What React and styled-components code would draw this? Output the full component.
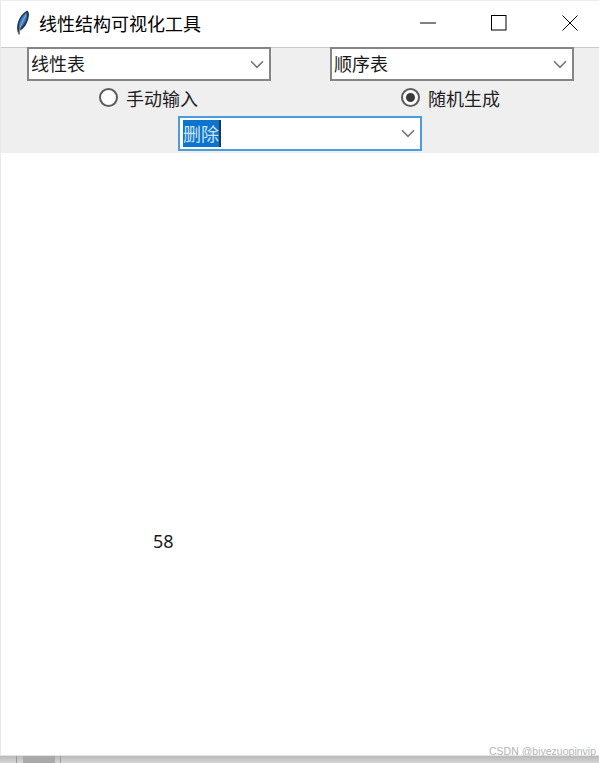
import React from 'react';
import styled, { createGlobalStyle } from 'styled-components';

const GlobalStyle = createGlobalStyle`
  html, body {
    margin: 0;
    padding: 0;
    background: #c9c9c9;
  }
  * {
    box-sizing: border-box;
  }
`;

const Page = styled.div`
  width: 599px;
  height: 763px;
  display: flex;
  flex-direction: column;
  overflow: hidden;
  font-family: 'Noto Sans CJK SC', 'Noto Sans', sans-serif;
  color: #1a1a1a;
`;

const Window = styled.div`
  height: 756px;
  display: flex;
  flex-direction: column;
  background: #fff;
  border-top: 1px solid #ececec;
  border-left: 1px solid #e8e8e8;
  border-bottom: 1px solid #e4e4e4;
`;

const TitleBar = styled.div`
  height: 46px;
  flex: none;
  display: flex;
  align-items: center;
  padding: 0 21px 2px 12px;
  background: #fff;
`;

const Title = styled.div`
  margin-left: 6px;
  font-size: 18px;
  line-height: 44px;
  color: #000;
  flex: 1;
`;

const WinButtons = styled.div`
  display: flex;
  align-items: center;
  gap: 55px;
`;

const WinButton = styled.div`
  width: 16px;
  height: 16px;
  display: flex;
  align-items: center;
  justify-content: center;
`;

const Controls = styled.div`
  height: 106px;
  flex: none;
  display: flex;
  flex-direction: column;
  background: #efefef;
  border-top: 1px solid #c8c8c8;
`;

const ComboRow = styled.div`
  display: flex;
  gap: 59px;
  margin-top: -1px;
  padding-left: 26px;
`;

const RadioRow = styled.div`
  display: flex;
  height: 35px;
  align-items: center;
  gap: 203px;
  padding: 0 0 2px 98px;
`;

const ThirdRow = styled.div`
  display: flex;
  padding-left: 177px;
`;

const Combo = styled.div`
  width: 244px;
  height: ${props => (props.$focused ? '35px' : '34px')};
  display: flex;
  align-items: center;
  justify-content: space-between;
  padding: 0 5px 0 ${props => (props.$focused ? '3px' : '2px')};
  background: #fff;
  border: ${props => (props.$focused ? '2px solid #4a9be0' : '2px solid #858585')};
  font-size: 18px;
  color: #1a1a1a;
`;

const ComboText = styled.span`
  line-height: 26px;
  padding-bottom: 2px;
`;

const Selected = styled.span`
  background: #0a74d0;
  color: #cfe3ee;
  height: 27px;
  line-height: 26px;
  border-right: 2px solid #143a5c;
`;

const Radio = styled.label`
  display: flex;
  align-items: center;
  gap: 8px;
  font-size: 18px;
  line-height: 22px;
  color: #222;
`;

const RadioDot = styled.span`
  width: 19px;
  height: 19px;
  display: flex;
  align-items: center;
  justify-content: center;
  border-radius: 50%;
  background: #fff;
  border: 2px solid #5c5c5c;

  &::after {
    content: '';
    width: 9px;
    height: 9px;
    border-radius: 50%;
    background: ${props => (props.$checked ? '#3a3a3a' : 'transparent')};
  }
`;

const Canvas = styled.div`
  position: relative;
  flex: 1;
  background: #fff;
`;

const CanvasText = styled.span`
  position: absolute;
  left: 152px;
  top: 376px;
  font-family: 'Noto Sans', sans-serif;
  font-size: 18px;
  line-height: 24px;
  color: #1a1a1a;
`;

const Watermark = styled.span`
  position: absolute;
  right: 3px;
  bottom: -3px;
  font-family: 'Liberation Sans', sans-serif;
  font-size: 10.5px;
  line-height: 14px;
  color: #b4b4b4;
`;

const BehindStrip = styled.div`
  flex: 1;
  display: flex;
  padding-left: 16px;
  background: linear-gradient(#b9b9b9, #d6d6d6);
`;

const BehindTab = styled.div`
  width: 45px;
  display: flex;
  justify-content: center;
  border-left: 1px solid #999;
  border-right: 1px solid #999;

  &::before {
    content: '';
    width: 32px;
    background: #a9a9a9;
  }
`;

const Chevron = () => (
  <svg width="14" height="9" viewBox="0 0 14 9" fill="none">
    <path d="M1 1.2 7 7.4 13 1.2" stroke="#777" strokeWidth="1.6" />
  </svg>
);

const Feather = () => (
  <svg width="20" height="28" viewBox="0 0 20 28">
    <path d="M5.6 25.5C1.8 17.5 5.5 6.5 14 1.5c3 1.5 2.4 7-.2 12.4-1.6 3.4-3.8 6-6.6 7.6l-.6 4z" fill="#27364a" />
    <path d="M6.3 19.5C5 14 8.5 7 13.6 3.6c1.4 4.6-1.4 12-7.3 15.9z" fill="#3d7ccf" />
    <path d="M5.8 24.5C7 17.5 9.5 11.5 13 6" stroke="#a9c4e4" strokeWidth="0.7" fill="none" />
  </svg>
);

function App() {
  return (
    <Page>
      <GlobalStyle />
      <Window>
        <TitleBar>
          <Feather />
          <Title>线性结构可视化工具</Title>
          <WinButtons>
            <WinButton>
              <svg width="16" height="2" viewBox="0 0 16 2">
                <path d="M0 1H16" stroke="#000" strokeWidth="1" />
              </svg>
            </WinButton>
            <WinButton>
              <svg width="16" height="16" viewBox="0 0 16 16" fill="none">
                <rect x="0.5" y="0.5" width="14.5" height="14.5" stroke="#000" />
              </svg>
            </WinButton>
            <WinButton>
              <svg width="16" height="16" viewBox="0 0 16 16" fill="none">
                <path d="M0.5 0.5 15.5 15.5M15.5 0.5 0.5 15.5" stroke="#000" />
              </svg>
            </WinButton>
          </WinButtons>
        </TitleBar>
        <Controls>
          <ComboRow>
            <Combo>
              <ComboText>线性表</ComboText>
              <Chevron />
            </Combo>
            <Combo>
              <ComboText>顺序表</ComboText>
              <Chevron />
            </Combo>
          </ComboRow>
          <RadioRow>
            <Radio>
              <RadioDot />
              手动输入
            </Radio>
            <Radio>
              <RadioDot $checked />
              随机生成
            </Radio>
          </RadioRow>
          <ThirdRow>
            <Combo $focused>
              <Selected>删除</Selected>
              <Chevron />
            </Combo>
          </ThirdRow>
        </Controls>
        <Canvas>
          <CanvasText>58</CanvasText>
          <Watermark>CSDN @biyezuopinvip</Watermark>
        </Canvas>
      </Window>
      <BehindStrip>
        <BehindTab />
      </BehindStrip>
    </Page>
  );
}

export default App;
